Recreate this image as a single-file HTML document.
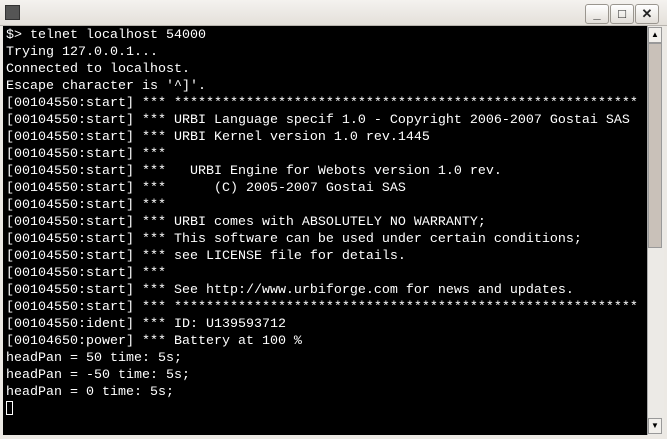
<!DOCTYPE html><html><head><style>
body{margin:0;width:667px;height:439px;background:#ece9e4;position:relative;overflow:hidden;font-family:"Liberation Sans",sans-serif}
.tb{position:absolute;left:0;top:0;width:667px;height:25px;background:linear-gradient(#f4f2ef,#e4e0da);border-bottom:1px solid #b8b4ae}
.ic{position:absolute;left:5px;top:5px;width:13px;height:13px;background:#555;border:1px solid #333}
.btn{position:absolute;top:4px;width:22px;height:18px;border:1px solid #9a968f;border-radius:3px;background:linear-gradient(#fff,#e2ded8);font:bold 13px "Liberation Sans";text-align:center;line-height:18px;color:#222}
.term{position:absolute;left:3px;top:26px;width:644px;height:409px;background:#000;color:#fff;font:13.33px/17px "Liberation Mono",monospace;white-space:pre;padding-left:3px;padding-top:1px;box-sizing:border-box}
.sb{position:absolute;left:647px;top:26px;width:16px;height:409px;background:#eceae6;border-left:1px solid #aaa}
.th{position:absolute;left:648px;top:43px;width:14px;height:205px;background:#c9c1b9;border:1px solid #999;box-sizing:border-box}
.ar{position:absolute;left:648px;width:14px;height:16px;background:#f2f0ec;border:1px solid #999;box-sizing:border-box;font-size:8px;text-align:center;line-height:14px}
.cur{display:inline-block;width:7px;height:14px;border:1px solid #fff;box-sizing:border-box;vertical-align:-3px}
</style></head><body>
<div class="tb"><div class="ic"></div>
<div class="btn" style="left:585px">_</div><div class="btn" style="left:610px">□</div><div class="btn" style="left:635px">✕</div></div>
<div class="term">$&gt; telnet localhost 54000
Trying 127.0.0.1...
Connected to localhost.
Escape character is '^]'.
[00104550:start] *** **********************************************************
[00104550:start] *** URBI Language specif 1.0 - Copyright 2006-2007 Gostai SAS
[00104550:start] *** URBI Kernel version 1.0 rev.1445
[00104550:start] ***
[00104550:start] ***   URBI Engine for Webots version 1.0 rev.
[00104550:start] ***      (C) 2005-2007 Gostai SAS
[00104550:start] ***
[00104550:start] *** URBI comes with ABSOLUTELY NO WARRANTY;
[00104550:start] *** This software can be used under certain conditions;
[00104550:start] *** see LICENSE file for details.
[00104550:start] ***
[00104550:start] *** See http://www.urbiforge.com for news and updates.
[00104550:start] *** **********************************************************
[00104550:ident] *** ID: U139593712
[00104650:power] *** Battery at 100 %
headPan = 50 time: 5s;
headPan = -50 time: 5s;
headPan = 0 time: 5s;
<span class="cur"></span></div>
<div class="sb"></div><div class="th"></div>
<div class="ar" style="top:27px">▲</div><div class="ar" style="top:418px">▼</div>
</body></html>
